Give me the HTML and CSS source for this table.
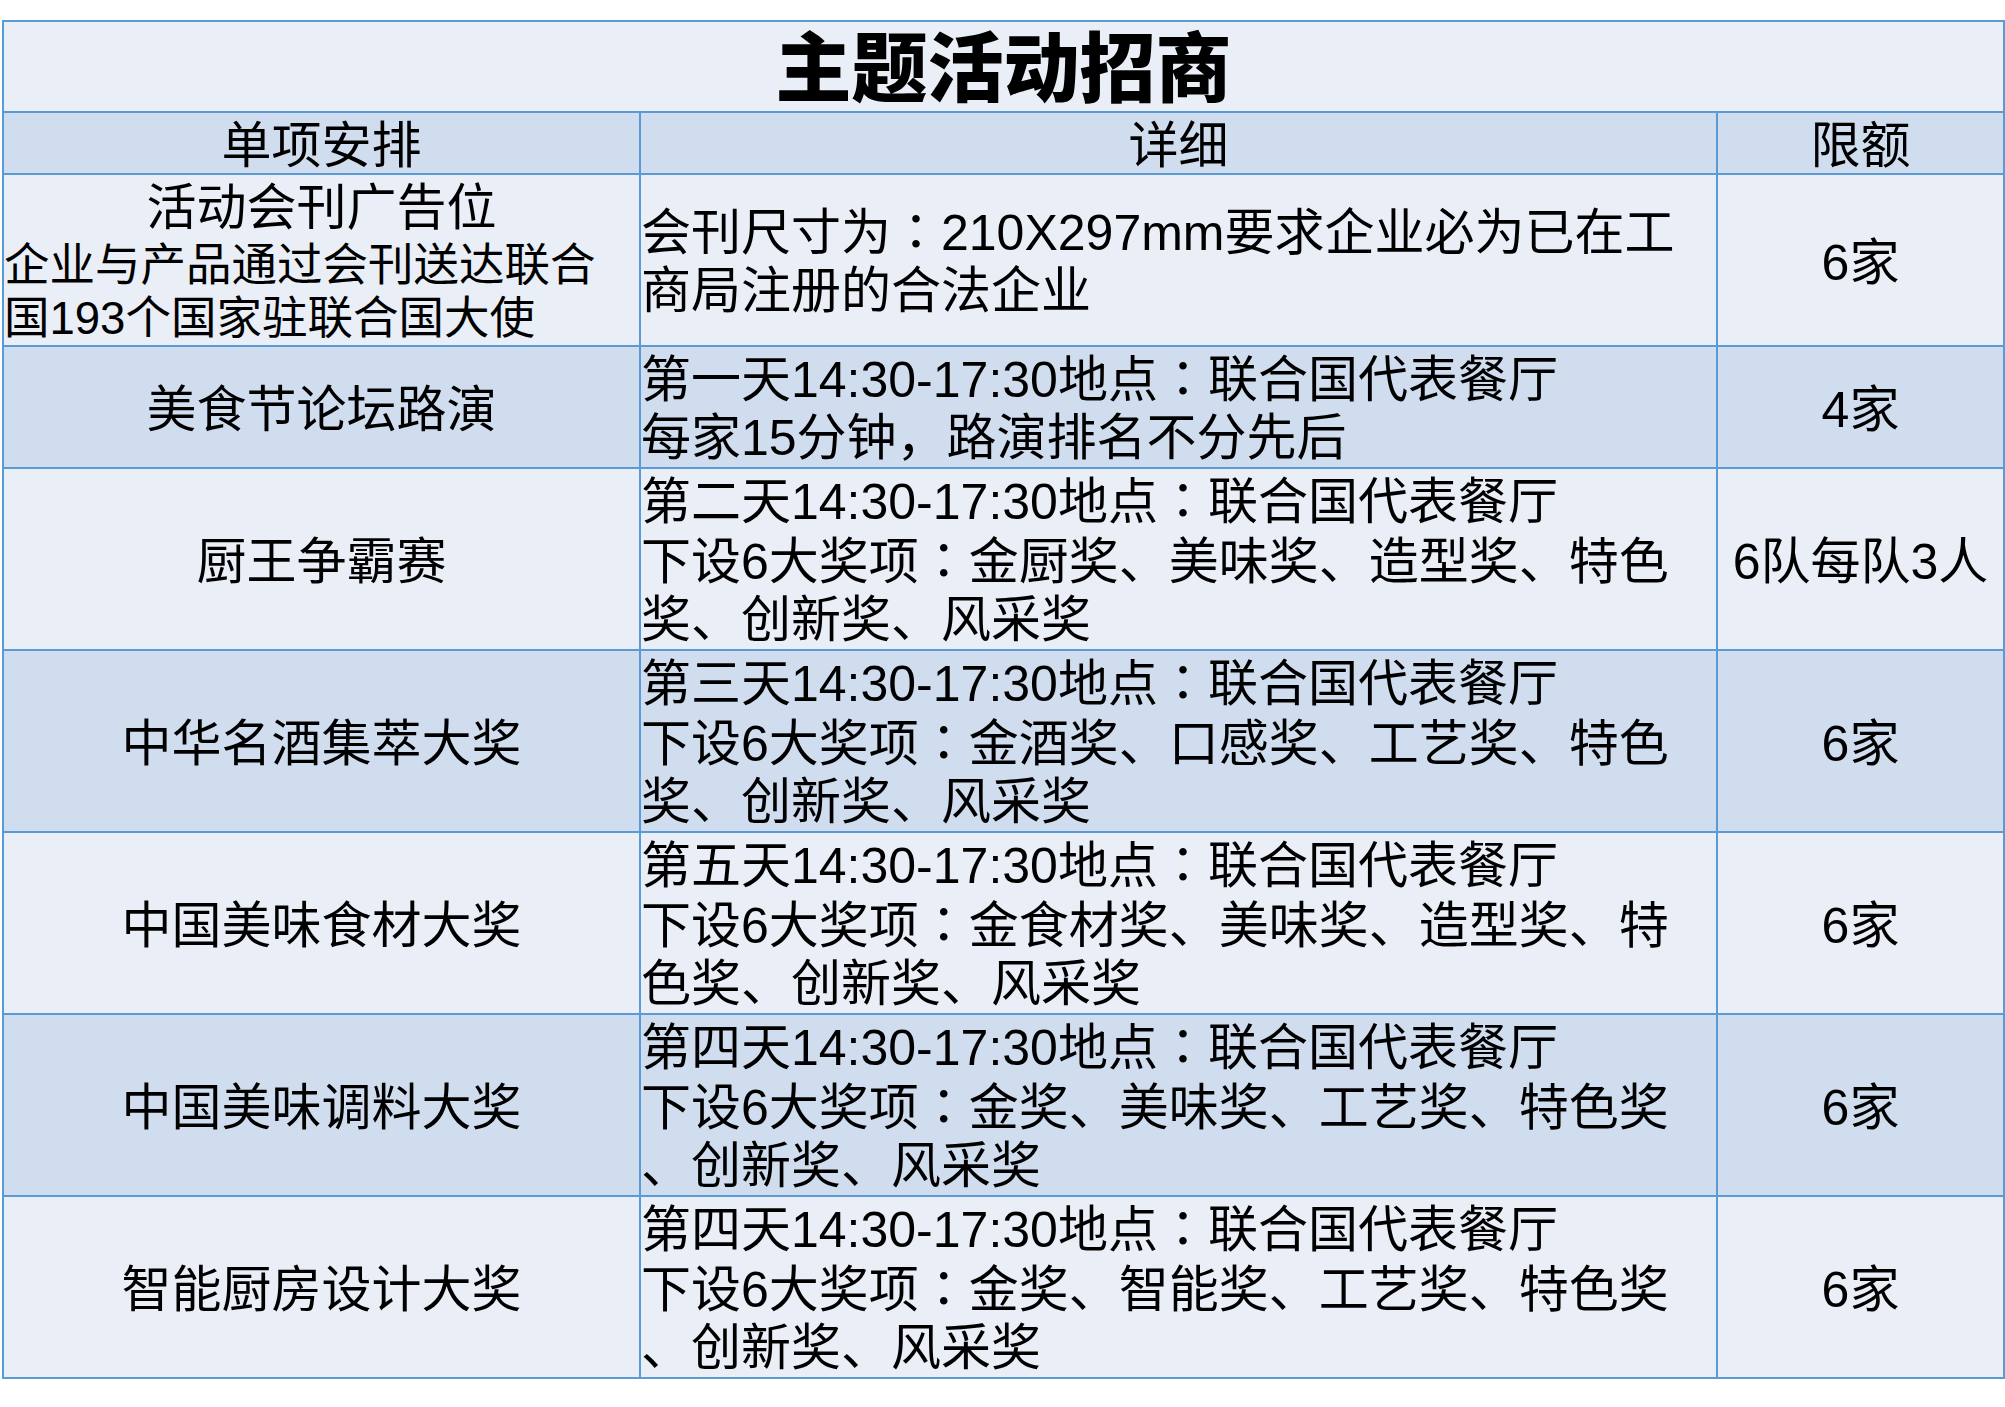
FILE: index.html
```html
<!DOCTYPE html>
<html lang="zh-CN">
<head>
<meta charset="utf-8">
<title>主题活动招商</title>
<link rel="stylesheet" href="styles.css">
</head>
<body>
<div class="page">
  <table class="sheet">
    <colgroup>
      <col class="c1">
      <col class="c2">
      <col class="c3">
    </colgroup>
    <tr class="title-row">
      <td colspan="3" class="title">主题活动招商</td>
    </tr>
    <tr class="head-row">
      <td class="head">单项安排</td>
      <td class="head">详细</td>
      <td class="head">限额</td>
    </tr>
    <tr class="light">
      <td class="item">
        <span class="line big center-text">活动会刊广告位</span>
        <span class="line small">企业与产品通过会刊送达联合</span>
        <span class="line small">国193个国家驻联合国大使</span>
      </td>
      <td class="detail">
        <span class="line">会刊尺寸为<span class="colon" lang="ja">：</span>210X297mm要求企业必为已在工</span>
        <span class="line">商局注册的合法企业</span>
      </td>
      <td class="center">6家</td>
    </tr>
    <tr class="dark">
      <td class="center">美食节论坛路演</td>
      <td class="detail">
        <span class="line">第一天14:30-17:30地点<span class="colon" lang="ja">：</span>联合国代表餐厅</span>
        <span class="line">每家15分钟，路演排名不分先后</span>
      </td>
      <td class="center">4家</td>
    </tr>
    <tr class="light">
      <td class="center">厨王争霸赛</td>
      <td class="detail">
        <span class="line">第二天14:30-17:30地点<span class="colon" lang="ja">：</span>联合国代表餐厅</span>
        <span class="line">下设6大奖项<span class="colon" lang="ja">：</span>金厨奖、美味奖、造型奖、特色</span>
        <span class="line">奖、创新奖、风采奖</span>
      </td>
      <td class="center">6队每队3人</td>
    </tr>
    <tr class="dark">
      <td class="center">中华名酒集萃大奖</td>
      <td class="detail">
        <span class="line">第三天14:30-17:30地点<span class="colon" lang="ja">：</span>联合国代表餐厅</span>
        <span class="line">下设6大奖项<span class="colon" lang="ja">：</span>金酒奖、口感奖、工艺奖、特色</span>
        <span class="line">奖、创新奖、风采奖</span>
      </td>
      <td class="center">6家</td>
    </tr>
    <tr class="light">
      <td class="center">中国美味食材大奖</td>
      <td class="detail">
        <span class="line">第五天14:30-17:30地点<span class="colon" lang="ja">：</span>联合国代表餐厅</span>
        <span class="line">下设6大奖项<span class="colon" lang="ja">：</span>金食材奖、美味奖、造型奖、特</span>
        <span class="line">色奖、创新奖、风采奖</span>
      </td>
      <td class="center">6家</td>
    </tr>
    <tr class="dark">
      <td class="center">中国美味调料大奖</td>
      <td class="detail">
        <span class="line">第四天14:30-17:30地点<span class="colon" lang="ja">：</span>联合国代表餐厅</span>
        <span class="line">下设6大奖项<span class="colon" lang="ja">：</span>金奖、美味奖、工艺奖、特色奖</span>
        <span class="line">、创新奖、风采奖</span>
      </td>
      <td class="center">6家</td>
    </tr>
    <tr class="light">
      <td class="center">智能厨房设计大奖</td>
      <td class="detail">
        <span class="line">第四天14:30-17:30地点<span class="colon" lang="ja">：</span>联合国代表餐厅</span>
        <span class="line">下设6大奖项<span class="colon" lang="ja">：</span>金奖、智能奖、工艺奖、特色奖</span>
        <span class="line">、创新奖、风采奖</span>
      </td>
      <td class="center">6家</td>
    </tr>
  </table>
</div>
</body>
</html>
```

FILE: styles.css
```css
html, body {
  margin: 0;
  padding: 0;
  background: #ffffff;
}

.page {
  padding: 20px 0 0 2px;
}

.sheet {
  border-collapse: collapse;
  table-layout: fixed;
  width: 2001px;
  font-family: "Liberation Sans", "Noto Sans CJK SC", sans-serif;
  font-size: 50px;
  line-height: 60px;
  color: #000000;
  border: 2px solid #5b9bd5;
}

.c1 { width: 637px; }
.c2 { width: 1077px; }
.c3 { width: 287px; }

.sheet td {
  border: 2px solid #5b9bd5;
  padding: 3px 0 0 0;
  vertical-align: middle;
  white-space: nowrap;
}

.title-row td {
  background: #e9eef7;
}

.sheet .title {
  text-align: center;
  font-size: 76px;
  font-weight: 900;
  line-height: 83px;
  padding-top: 6px;
}

.head-row td {
  background: #d0ddef;
}

.sheet .head {
  text-align: center;
  line-height: 54px;
  padding-top: 6px;
}

.light td {
  background: #e9eef7;
}

.dark td {
  background: #d0ddef;
}

.sheet .center {
  text-align: center;
  padding-top: 6px;
}

.center-text {
  text-align: center;
}

.line {
  display: block;
}

.detail .line:last-child {
  line-height: 57px;
}

.item {
  padding-left: 2px;
}

.big {
  font-size: 50px;
  line-height: 60px;
}

.small {
  font-size: 45.5px;
  line-height: 55px;
}

.item .small:last-child {
  line-height: 52px;
}

.colon {
  font-family: "Liberation Sans", "Noto Sans CJK JP", "Noto Sans CJK SC", sans-serif;
}
```
